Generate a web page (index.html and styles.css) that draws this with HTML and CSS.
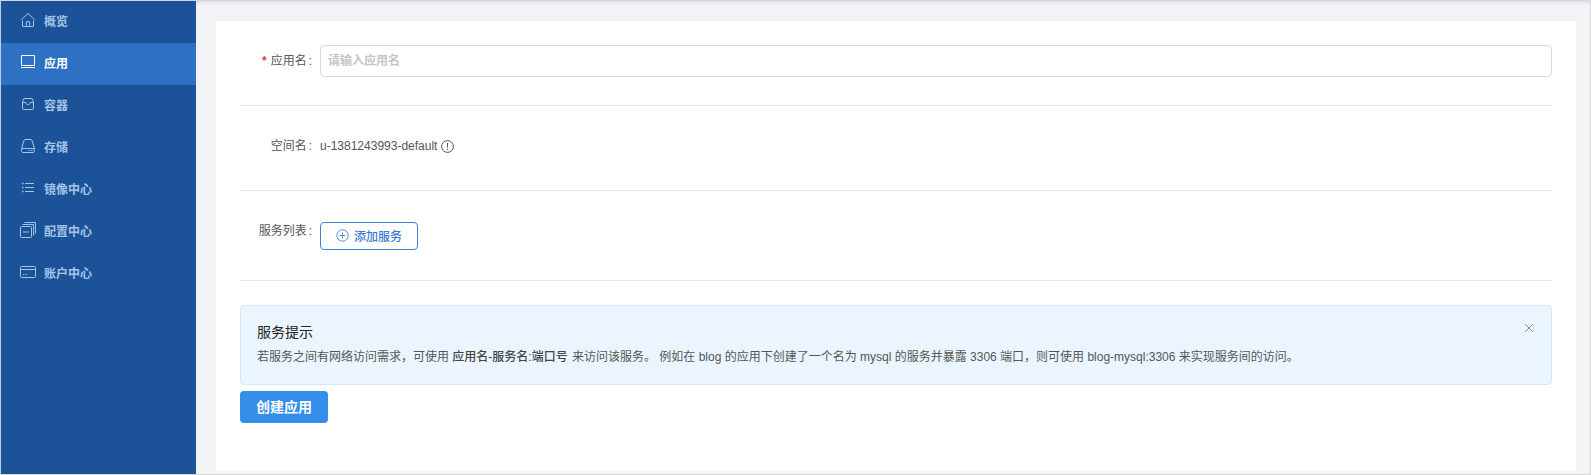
FILE: index.html
```html
<!DOCTYPE html>
<html lang="zh-CN">
<head>
<meta charset="utf-8">
<title>应用</title>
<link rel="stylesheet" href="styles.css">
</head>
<body>
<div class="app">
  <nav class="sidebar">
    <a class="nav-item"><svg class="nav-icon" viewBox="0 0 16 16"><path d="M1.200 7.900 8 1.400l6.800 6.500M2.500 8.500v6h11v-6M6.300 14.500v-4.800h3.400v4.800"/></svg><span>概览</span></a>
    <a class="nav-item active"><svg class="nav-icon" viewBox="0 0 16 16"><path d="M1.500 1.500h13v10h-13zM1 13.500h14"/></svg><span>应用</span></a>
    <a class="nav-item"><svg class="nav-icon" viewBox="0 0 16 16"><path d="M2.500 6.200 4 2.500h8l1.500 3.700v6.300q0 1-1 1h-9q-1 0-1-1zM2.500 6.500h3.300c0 3 4.400 3 4.400 0h3.300"/></svg><span>容器</span></a>
    <a class="nav-item"><svg class="nav-icon" viewBox="0 0 16 16"><path d="M1.700 10 4 2.500q.3-1 1-1h6q.7 0 1 1L14.300 10v3.500q0 1-1 1H2.700q-1 0-1-1zM1.700 10.500h12.600M8.500 12.500h1.500M11 12.500h1.500"/></svg><span>存储</span></a>
    <a class="nav-item"><svg class="nav-icon" viewBox="0 0 16 16"><path d="M5 3.500h9M5 7.500h9M5 11.500h9"/><path stroke-width="1.500" d="M2 3.500h1.500M2 7.500h1.500M2 11.500h1.500"/></svg><span>镜像中心</span></a>
    <a class="nav-item"><svg class="nav-icon" viewBox="0 0 16 16"><path d="M1.500 4.500h9q1 0 1 1v9q0 1-1 1h-9q-1 0-1-1v-9q0-1 1-1zM3 10h6M2.500 2.500h11v11M4.500.5h11v11"/></svg><span>配置中心</span></a>
    <a class="nav-item"><svg class="nav-icon" viewBox="0 0 16 16"><path d="M1.500 2.500h13q1 0 1 1v9q0 1-1 1h-13q-1 0-1-1v-9q0-1 1-1zM.5 5.500h15M3 10.500h1.200M5.500 10.500h1.200"/></svg><span>账户中心</span></a>
  </nav>
  <main class="main">
    <section class="card">
      <div class="row row-name">
        <label class="label" for="name"><span class="required">*</span>应用名<span class="colon">:</span></label>
        <input class="input" id="name" type="text" placeholder="请输入应用名">
      </div>
      <div class="row row-space">
        <span class="label">空间名<span class="colon">:</span></span>
        <span class="value">u-1381243993-default<svg class="info" viewBox="0 0 13 13"><circle cx="6.500" cy="6.500" r="5.900"/><path d="M6.500 3v4.700M6.500 8.900v1.200"/></svg></span>
      </div>
      <div class="row row-service">
        <span class="label">服务列表<span class="colon">:</span></span>
        <button class="add" type="button"><svg class="plus" viewBox="0 0 13 13"><circle cx="6.500" cy="6.500" r="5.700"/><path d="M3.500 6.500h6M6.500 3.500v6"/></svg><span>添加服务</span></button>
      </div>
      <div class="alert">
        <div class="alert-body">
          <div class="alert-title">服务提示</div>
          <div class="alert-text">若服务之间有网络访问需求，可使用 <b>应用名-服务名:端口号</b> 来访问该服务。 例如在 blog 的应用下创建了一个名为 mysql 的服务并暴露 3306 端口，则可使用 blog-mysql:3306 来实现服务间的访问。</div>
        </div>
        <svg class="close" viewBox="0 0 10 10"><path d="M1 1l8 8M9 1 1 9"/></svg>
      </div>
      <button class="submit" type="button">创建应用</button>
    </section>
  </main>
</div>
</body>
</html>
```
FILE: styles.css
```css
* { box-sizing: border-box; }
body {
  margin: 0;
  font: 12px/18px "Liberation Sans", "Noto Sans CJK SC", sans-serif;
  color: #555;
}
button, input { font-family: inherit; margin: 0; }
svg { fill: none; stroke: currentColor; flex: none; }
.app {
  display: flex;
  height: 475px;
  border: 1px solid #d5d6d8;
  border-left-color: #b9cde6;
  overflow: hidden;
}
.sidebar { width: 195px; background: #1c5398; flex: none; }
.nav-item {
  display: flex;
  align-items: center;
  gap: 8px;
  height: 42px;
  padding-left: 19px;
  color: #a4c4e9;
  font-weight: 700;
}
.nav-item.active { background: #2d70c4; color: #fff; }
.nav-icon { width: 16px; height: 16px; margin-top: -4px; }
.main {
  flex: 1;
  min-width: 0;
  padding: 20px 14px 3px 20px;
  background: linear-gradient(#dedfe2, #f1f3f5 4px);
}
.card { height: 450px; padding: 0 24px; background: #fff; }
.row { display: flex; height: 85px; padding-top: 24px; border-bottom: 1px solid #e6e6e6; }
.row-service { height: 90px; }
.label {
  width: 80px;
  height: 32px;
  line-height: 32px;
  text-align: right;
  white-space: nowrap;
  flex: none;
}
.colon { margin: 0 8px 0 2px; }
.required { margin-right: 4px; color: #e04050; font-weight: 700; }
.input {
  flex: 1;
  height: 32px;
  padding: 4px 7px;
  border: 1px solid #d9d9d9;
  border-radius: 4px;
  font-size: 12px;
  outline: none;
}
.input::placeholder { color: #c5c5c5; font-weight: 700; opacity: 1; }
.value { display: flex; align-items: center; gap: 4px; height: 32px; }
.info { width: 13px; height: 13px; }
.add {
  display: flex;
  align-items: center;
  gap: 5px;
  width: 98px;
  height: 28px;
  margin-top: 7px;
  padding: 0 14px 0 15px;
  border: 1px solid #3c83d0;
  border-radius: 4px;
  background: #fff;
  color: #3e78d2;
  font-size: 12px;
  font-weight: 500;
  white-space: nowrap;
}
.add span { padding-bottom: 2px; }
.plus { width: 13px; height: 13px; margin-top: -1px; stroke: #4a90d9; }
.alert {
  display: flex;
  justify-content: space-between;
  height: 80px;
  margin-top: 24px;
  padding: 16px;
  border: 1px solid #d5e8f6;
  border-radius: 4px;
  background: #eaf5ff;
}
.alert-title { font-size: 14px; line-height: 21px; color: #222; }
.alert-text { margin-top: 5px; white-space: nowrap; }
.alert-text b { margin-right: 1px; font-weight: 500; color: #444; }
.close { width: 10px; height: 10px; margin: 1px 1px 0 0; color: #858c9b; }
.submit {
  display: block;
  width: 88px;
  height: 32px;
  margin-top: 6px;
  padding: 0 0 2px;
  border: 0;
  border-radius: 4px;
  background: #338eea;
  color: #fff;
  font-size: 14px;
  font-weight: 700;
}
```
